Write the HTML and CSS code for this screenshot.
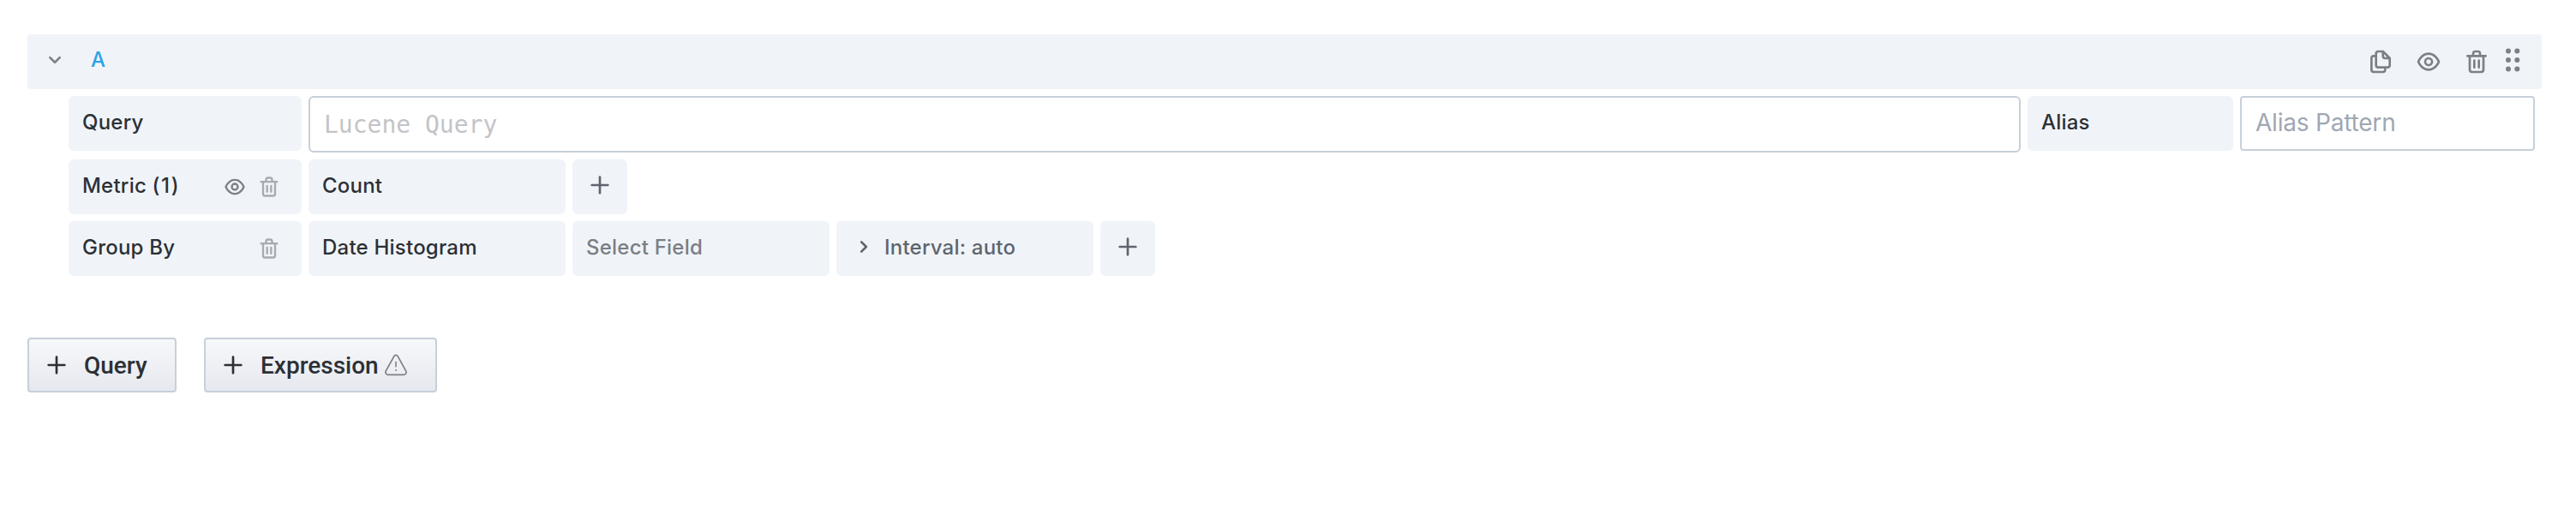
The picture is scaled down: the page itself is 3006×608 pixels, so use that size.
FILE: index.html
```html
<!DOCTYPE html>
<html lang="en">
<head>
<meta charset="utf-8">
<title>Query editor</title>
<link rel="stylesheet" href="styles.css">
</head>
<body>
<svg class="defs" width="0" height="0">
  <symbol id="plus" viewBox="0 0 24 24"><path d="M19 11h-6V5a1 1 0 0 0-2 0v6H5a1 1 0 0 0 0 2h6v6a1 1 0 0 0 2 0v-6h6a1 1 0 0 0 0-2z"/></symbol>
  <symbol id="down" viewBox="0 0 24 24"><path d="M17 9.17a1 1 0 0 0-1.41 0L12 12.71 8.46 9.17a1 1 0 0 0-1.41 0 1 1 0 0 0 0 1.42l4.24 4.24a1 1 0 0 0 1.42 0L17 10.59a1 1 0 0 0 0-1.42z"/></symbol>
  <symbol id="right" viewBox="0 0 24 24"><path d="M14.83 11.29 10.59 7.05a1 1 0 0 0-1.42 0 1 1 0 0 0 0 1.41L12.71 12l-3.54 3.54a1 1 0 0 0 0 1.41 1 1 0 0 0 .71.29 1 1 0 0 0 .71-.29l4.24-4.24a1 1 0 0 0 0-1.42z"/></symbol>
  <symbol id="eye" viewBox="0 0 24 24"><path d="M21.92 11.6C19.9 6.91 16.1 4 12 4s-7.9 2.91-9.92 7.6a1 1 0 0 0 0 .8C4.1 17.09 7.9 20 12 20s7.9-2.91 9.92-7.6a1 1 0 0 0 0-.8zM12 18c-3.17 0-6.17-2.29-7.9-6C5.83 8.29 8.83 6 12 6s6.17 2.29 7.9 6c-1.73 3.71-4.73 6-7.9 6zm0-10a4 4 0 1 0 4 4 4 4 0 0 0-4-4zm0 6a2 2 0 1 1 2-2 2 2 0 0 1-2 2z"/></symbol>
  <symbol id="trash" viewBox="0 0 24 24"><path d="M10 18a1 1 0 0 0 1-1v-6a1 1 0 0 0-2 0v6a1 1 0 0 0 1 1zM20 6h-4V5a3 3 0 0 0-3-3h-2a3 3 0 0 0-3 3v1H4a1 1 0 0 0 0 2h1v11a3 3 0 0 0 3 3h8a3 3 0 0 0 3-3V8h1a1 1 0 0 0 0-2zM10 5a1 1 0 0 1 1-1h2a1 1 0 0 1 1 1v1h-4zm7 14a1 1 0 0 1-1 1H8a1 1 0 0 1-1-1V8h10zm-3-1a1 1 0 0 0 1-1v-6a1 1 0 0 0-2 0v6a1 1 0 0 0 1 1z"/></symbol>
  <symbol id="copy" viewBox="0 0 24 24"><path d="M21 8.94a1.31 1.31 0 0 0-.06-.27v-.09a1.07 1.07 0 0 0-.19-.28l-6-6a1.07 1.07 0 0 0-.28-.19.32.32 0 0 0-.09 0A.88.88 0 0 0 14.05 2H10a3 3 0 0 0-3 3v1H6a3 3 0 0 0-3 3v10a3 3 0 0 0 3 3h8a3 3 0 0 0 3-3v-1h1a3 3 0 0 0 3-3V9zM15 5.41 17.59 8H16a1 1 0 0 1-1-1zM15 19a1 1 0 0 1-1 1H6a1 1 0 0 1-1-1V9a1 1 0 0 1 1-1h1v7a3 3 0 0 0 3 3h5zm4-4a1 1 0 0 1-1 1h-8a1 1 0 0 1-1-1V5a1 1 0 0 1 1-1h3v3a3 3 0 0 0 3 3h3z"/></symbol>
  <symbol id="grip" viewBox="0 0 20 28"><circle cx="5" cy="3.5" r="3"/><circle cx="15.3" cy="3.5" r="3"/><circle cx="5" cy="14" r="3"/><circle cx="15.3" cy="14" r="3"/><circle cx="5" cy="24.5" r="3"/><circle cx="15.3" cy="24.5" r="3"/></symbol>
  <symbol id="warn" viewBox="0 0 28 28"><path d="M11.9 3.7 2.2 21.1a2.9 2.9 0 0 0 2.5 4.2h18.6a2.9 2.9 0 0 0 2.5-4.2L16.1 3.7a2.4 2.4 0 0 0-4.2 0z" fill="none" stroke="currentColor" stroke-width="1.7"/><path d="M14 10.5v5.2" fill="none" stroke="currentColor" stroke-width="1.6" stroke-linecap="round"/><circle cx="14" cy="20" r="1"/></symbol>
</svg>
<main class="editor">
  <header class="query-header">
    <svg class="icon chevron"><use href="#down"/></svg>
    <span class="ref-id">A</span>
    <div class="actions">
      <svg class="icon"><use href="#copy"/></svg>
      <svg class="icon"><use href="#eye"/></svg>
      <svg class="icon"><use href="#trash"/></svg>
      <svg class="grip"><use href="#grip"/></svg>
    </div>
  </header>
  <section class="rows">
    <div class="row row-query">
      <div class="cell label">Query</div>
      <div class="input lucene">Lucene Query</div>
      <div class="cell alias">Alias</div>
      <div class="input pattern">Alias Pattern</div>
    </div>
    <div class="row">
      <div class="cell label"><span>Metric <span class="count">(1)</span></span>
        <span class="tools"><svg class="icon small"><use href="#eye"/></svg><svg class="icon small faded"><use href="#trash"/></svg></span>
      </div>
      <div class="cell segment">Count</div>
      <div class="cell add"><svg class="icon"><use href="#plus"/></svg></div>
    </div>
    <div class="row">
      <div class="cell label">Group By
        <span class="tools"><svg class="icon small faded"><use href="#trash"/></svg></span>
      </div>
      <div class="cell segment">Date Histogram</div>
      <div class="cell segment placeholder">Select Field</div>
      <div class="cell segment interval"><svg class="icon"><use href="#right"/></svg>Interval: auto</div>
      <div class="cell add"><svg class="icon"><use href="#plus"/></svg></div>
    </div>
  </section>
  <footer class="buttons">
    <div class="button"><svg class="icon plus"><use href="#plus"/></svg>Query</div>
    <div class="button wide"><svg class="icon plus"><use href="#plus"/></svg>Expression<svg class="icon warn"><use href="#warn"/></svg></div>
  </footer>
</main>
</body>
</html>
```
FILE: styles.css
```css
* { box-sizing: border-box; }
body {
  margin: 0;
  background: #fff;
  color: #2c3035;
  font-family: Inter, "Liberation Sans", sans-serif;
}
.defs { display: block; height: 0; }
.editor { padding: 40px 40px 0 32px; }
.icon { width: 32px; height: 32px; fill: currentColor; flex: none; }
.query-header {
  display: flex;
  align-items: center;
  height: 64px;
  padding: 0 24px 0 16px;
  background: #f0f4f9;
  border-radius: 4px;
  color: #7b8087;
}
.chevron { margin-bottom: 4px; }
.ref-id {
  margin: 0 0 5px 26px;
  font-size: 24px;
  font-weight: 500;
  color: #2ea2e5;
}
.actions { display: flex; align-items: center; gap: 24px; margin-left: auto; }
.grip { width: 20px; height: 28px; margin: 0 0 4px -8px; fill: currentColor; }
.rows { padding: 8px 8px 0 48px; }
.row { display: flex; gap: 8px; margin-bottom: 8px; }
.cell {
  display: flex;
  align-items: center;
  height: 64px;
  padding: 0 16px 4px;
  background: #f0f4f9;
  border-radius: 6px;
  font-size: 24px;
  font-weight: 500;
  letter-spacing: 0.22px;
  white-space: nowrap;
}
.label { width: 272px; }
.count { letter-spacing: 1.6px; }
.segment { width: 300px; }
.alias { width: 240px; }
.add { width: 64px; color: #60646e; }
.placeholder { color: #7b7e83; }
.interval { color: #60646e; }
.interval .icon { margin-right: 8px; }
.tools { display: flex; gap: 12px; margin: 0 0 -4px auto; padding-right: 8px; color: #7b8087; }
.small { width: 28px; height: 28px; }
.faded { color: #a7aaaf; }
.input {
  display: flex;
  align-items: center;
  height: 64px;
  border: 2px solid #c7d0d9;
  border-radius: 4px;
  padding: 0 16px;
  font-size: 28px;
  white-space: nowrap;
}
.lucene {
  flex: 1;
  height: 66px;
  border-radius: 6px;
  color: #c3c4c8;
  font-family: "DejaVu Sans Mono", monospace;
}
.pattern { width: 344px; padding-bottom: 2px; color: #9fa7b3; letter-spacing: -0.2px; }
.buttons { display: flex; gap: 32px; padding-top: 64px; }
.button {
  display: flex;
  align-items: center;
  width: 174px;
  height: 64px;
  padding: 0 16px;
  border: 2px solid #c7d0d9;
  border-radius: 4px;
  background: linear-gradient(#f7f8fa, #e6e8ef);
  font: 500 28px Roboto, sans-serif;
  white-space: nowrap;
}
.wide { width: 272px; }
.plus { margin-right: 16px; }
.warn { width: 28px; height: 28px; margin-left: 6px; color: #7b8087; }
```
